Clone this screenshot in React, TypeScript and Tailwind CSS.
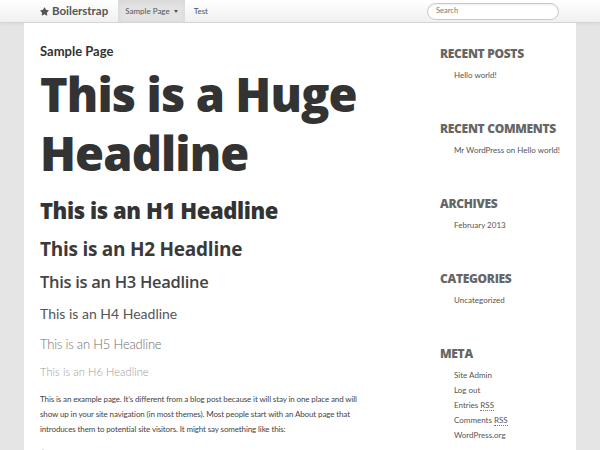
import { FaStar } from "react-icons/fa";

const WIDGETS = [
  { title: "Recent Posts", items: [<>Hello world!</>] },
  { title: "Recent Comments", items: [<>Mr WordPress on Hello world!</>] },
  { title: "Archives", items: [<>February 2013</>] },
  { title: "Categories", items: [<>Uncategorized</>] },
  {
    title: "Meta",
    items: [
      <>Site Admin</>,
      <>Log out</>,
      <>Entries <abbr className="no-underline border-b border-dotted border-[#777]">RSS</abbr></>,
      <>Comments <abbr className="no-underline border-b border-dotted border-[#777]">RSS</abbr></>,
      <>WordPress.org</>,
    ],
  },
];

export default function App() {
  return (
    <div className="w-[600px] h-[450px] overflow-hidden bg-[#e5e5e5] font-['Lato',sans-serif] text-[#333]">
      {/* Navbar */}
      <nav className="h-[23px] flex items-stretch bg-gradient-to-b from-white to-[#f0f0f0] border-b border-[#d4d4d4] shadow-[0_1px_4px_rgba(0,0,0,0.06)] pl-[40px] pr-[41px]">
        <a className="flex items-center gap-[3px] text-[11.5px] font-bold text-[#555] mr-[10px]">
          <FaStar className="w-[9px] h-[9px] text-[#555]" />
          Boilerstrap
        </a>
        <a className="flex items-center gap-[4px] px-[7px] bg-[#e3e3e3] text-[8px] text-[#555] shadow-[inset_0_2px_6px_rgba(0,0,0,0.06)]">
          Sample Page
          <span className="w-0 h-0 border-x-[2.5px] border-x-transparent border-t-[3px] border-t-[#555]" />
        </a>
        <a className="flex items-center px-[9px] text-[8px] text-[#555]">Test</a>
        <div className="ml-auto flex items-center">
          <div className="w-[132px] h-[17px] rounded-full border border-[#c8c8c8] bg-white shadow-[inset_0_1px_2px_rgba(0,0,0,0.08)] flex items-center pl-[8px] text-[7.5px] text-[#777]">
            Search
          </div>
        </div>
      </nav>

      {/* Page */}
      <div className="mx-[24px] h-[427px] bg-white flex pl-[16px] pr-[16px] pt-[20px]">
        <main className="w-[376px] shrink-0">
          <div className="text-[13px] leading-[16px] font-bold text-[#333]">Sample Page</div>
          <h1 className="mt-[6px] font-['Open_Sans',sans-serif] text-[47px] leading-[59px] font-extrabold tracking-[-0.9px] text-[#333]">
            This is a Huge
            <br />
            Headline
          </h1>
          <h1 className="mt-[14px] font-['Open_Sans',sans-serif] text-[22px] leading-[26px] font-extrabold tracking-[-0.4px] text-[#333]">
            This is an H1 Headline
          </h1>
          <h2 className="mt-[14px] font-['Open_Sans',sans-serif] text-[19px] leading-[24px] font-bold tracking-[-0.25px] text-[#3a3a3a]">
            This is an H2 Headline
          </h2>
          <h3 className="mt-[10px] font-['Open_Sans',sans-serif] text-[16.5px] leading-[22px] font-semibold tracking-[-0.3px] text-[#444]">
            This is an H3 Headline
          </h3>
          <h4 className="mt-[11px] text-[14px] leading-[20px] font-normal text-[#555]">This is an H4 Headline</h4>
          <h5 className="mt-[11px] text-[13px] leading-[18px] font-light tracking-[-0.2px] text-[#707070]">This is an H5 Headline</h5>
          <h6 className="mt-[12px] text-[11px] leading-[14px] font-light tracking-[0.1px] text-[#999]">This is an H6 Headline</h6>
          <p className="mt-[13px] text-[8px] leading-[15px] tracking-[-0.12px] text-[#444]">
            This is an example page. It’s different from a blog post because it will stay in one place and will
            <br />
            show up in your site navigation (in most themes). Most people start with an About page that
            <br />
            introduces them to potential site visitors. It might say something like this:
          </p>
          <div className="mt-[12px] ml-[2px] w-[2px] h-[2px] bg-[#ddd]" />
        </main>

        <aside className="ml-[24px] w-[120px] shrink-0 flex flex-col gap-[40px] pt-[4px]">
          {WIDGETS.map((w) => (
            <section key={w.title} className="h-[35px]">
              <h3 className="font-['Open_Sans',sans-serif] text-[12px] leading-[14px] font-extrabold tracking-[-0.3px] uppercase text-[#666] whitespace-nowrap">
                {w.title}
              </h3>
              <ul className="mt-[7px] pl-[14px] flex flex-col">
                {w.items.map((it, i) => (
                  <li key={i} className="text-[8px] leading-[15px] text-[#555] whitespace-nowrap">
                    {it}
                  </li>
                ))}
              </ul>
            </section>
          ))}
        </aside>
      </div>
    </div>
  );
}
